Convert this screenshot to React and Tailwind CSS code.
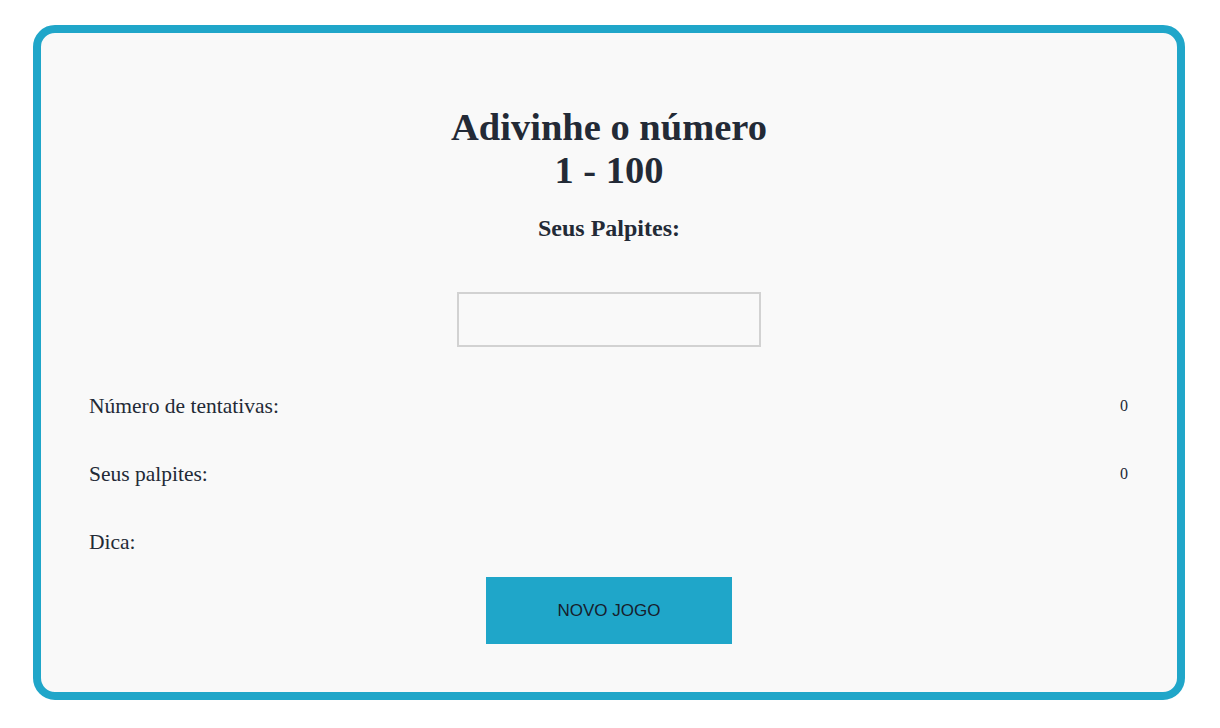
import React from 'react'

export default function App() {
  return (
    <div className="min-h-screen bg-white pl-[33px] pr-[35px] pt-[25px] pb-[28px] font-['Liberation_Serif',serif] text-[#232a36]">
      <div className="h-[675px] rounded-[22px] border-[8px] border-[#20a6c9] bg-[#f9f9f9] px-[48px] pt-[73px]">
        <h1 className="text-center text-[38.5px] font-bold leading-[43px]">
          Adivinhe o número
          <br />
          1 - 100
        </h1>
        <h3 className="mt-[22px] text-center text-[24px] font-bold leading-[28px]">Seus Palpites:</h3>
        <div className="mt-[50px] flex justify-center">
          <input className="h-[55px] w-[304px] border-2 border-[#d2d2d2] bg-[#f9f9f9] outline-none" />
        </div>
        <div className="mt-[44px] flex items-center justify-between h-[30px]">
          <span className="text-[21.5px]">Número de tentativas:</span>
          <span className="text-[16px] pr-[1px]">0</span>
        </div>
        <div className="mt-[38px] flex items-center justify-between h-[30px]">
          <span className="text-[21.5px]">Seus palpites:</span>
          <span className="text-[16px] pr-[1px]">0</span>
        </div>
        <div className="mt-[38px] flex items-center h-[30px]">
          <span className="text-[21.5px]">Dica:</span>
        </div>
        <div className="mt-[20px] flex justify-center">
          <button className="h-[67px] w-[246px] bg-[#1fa6c9] font-['Liberation_Sans',sans-serif] text-[17px] text-[#17202c]">
            NOVO JOGO
          </button>
        </div>
      </div>
    </div>
  )
}
